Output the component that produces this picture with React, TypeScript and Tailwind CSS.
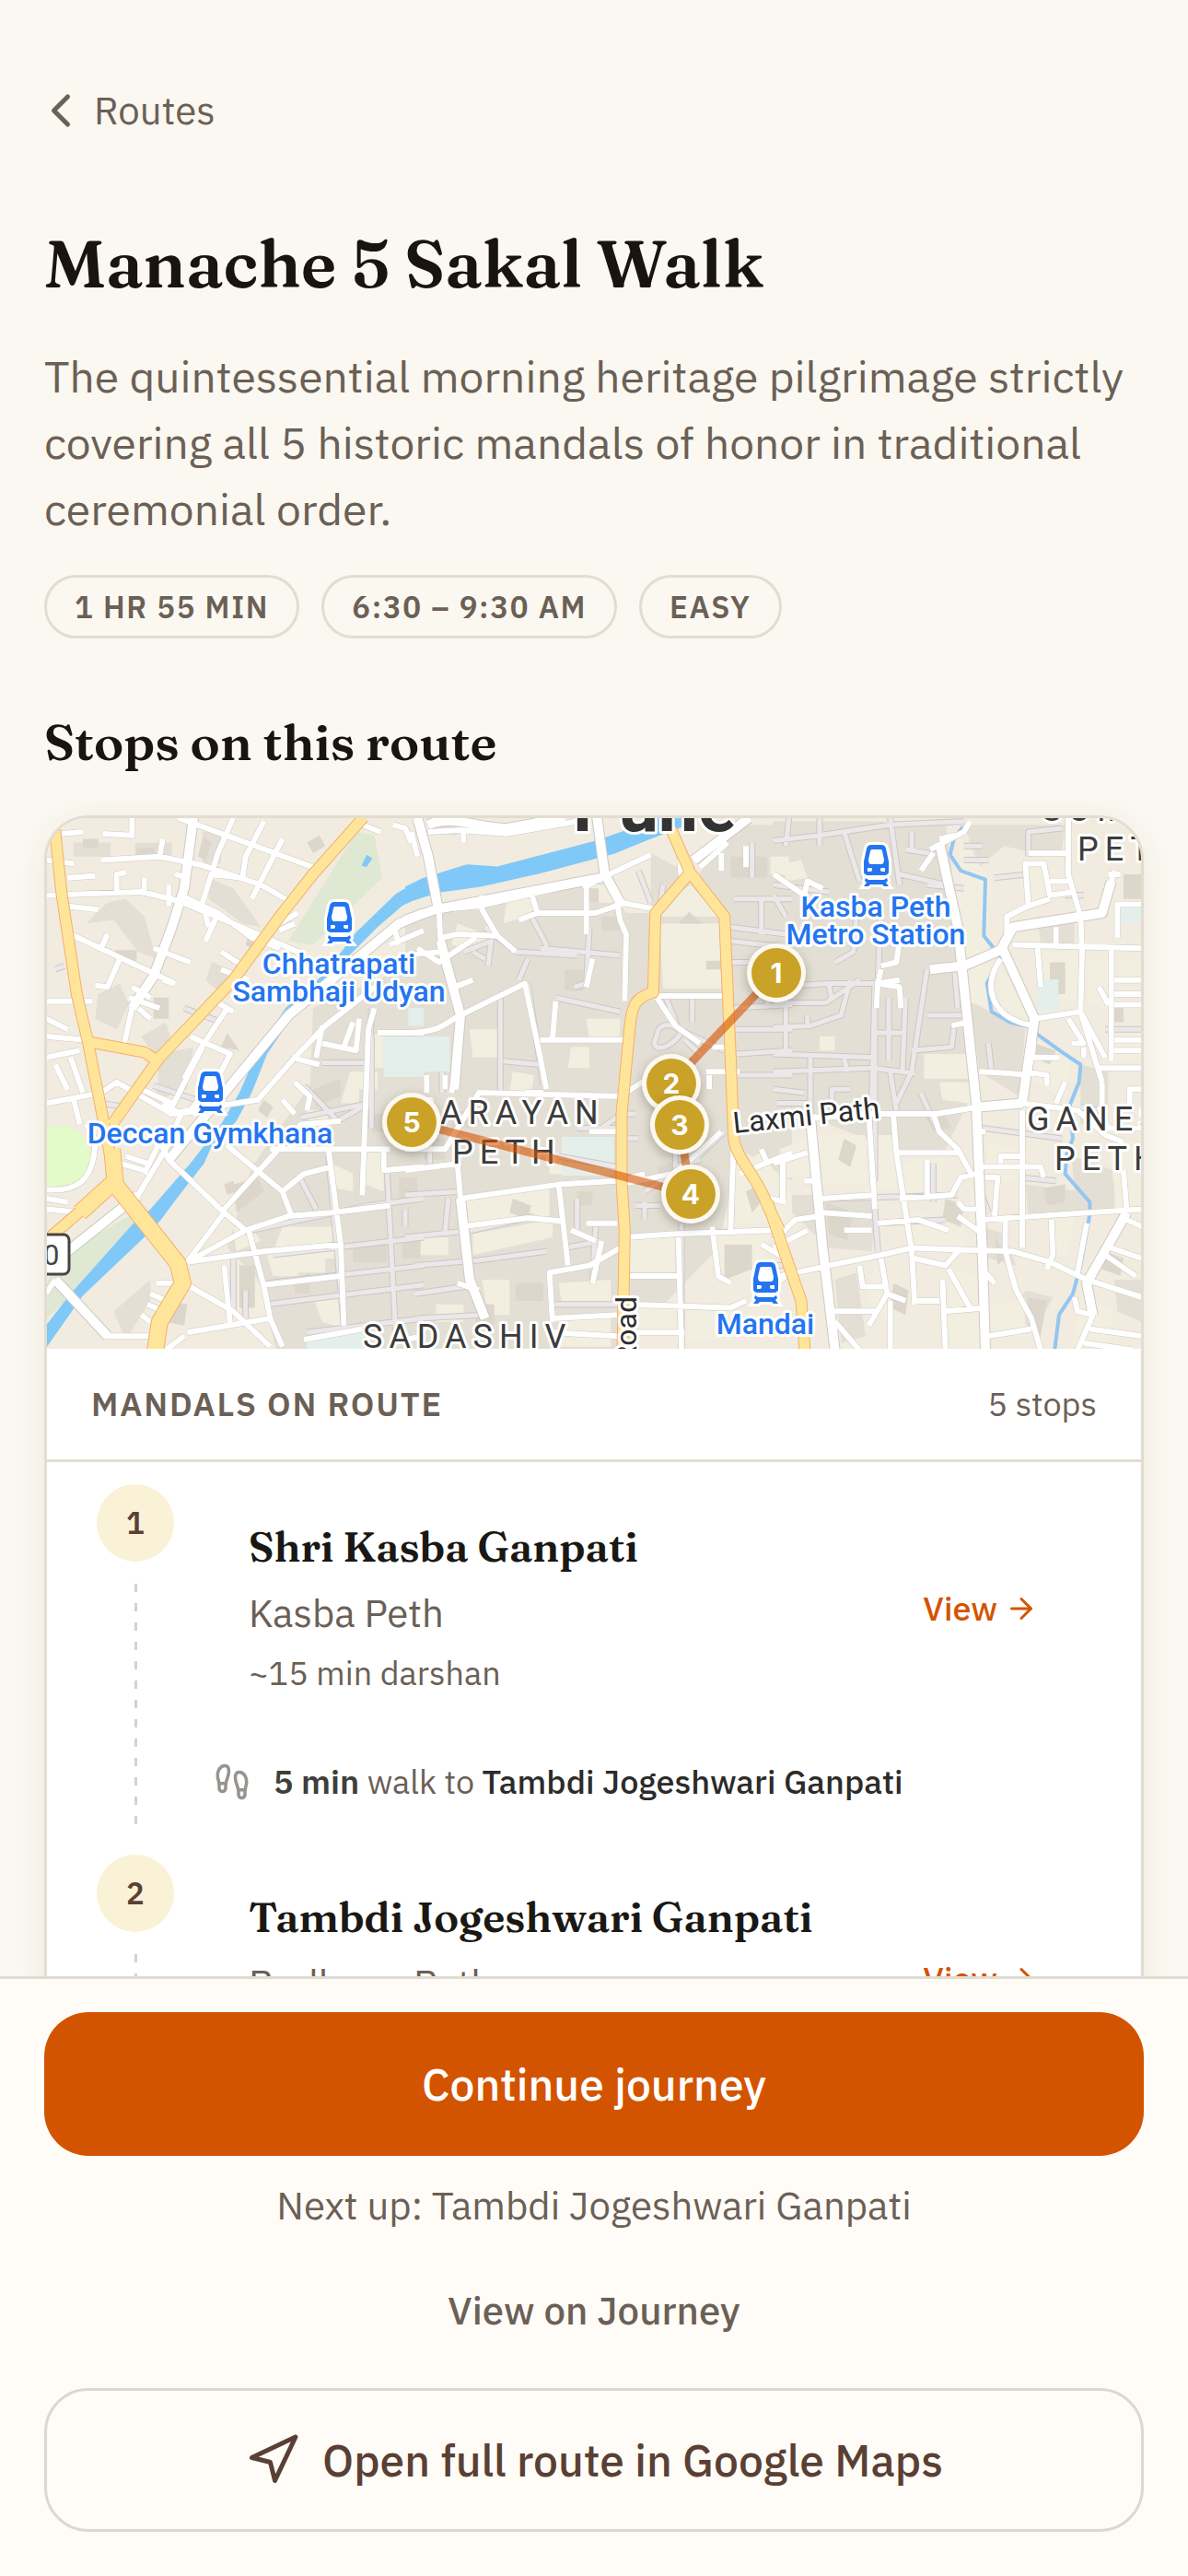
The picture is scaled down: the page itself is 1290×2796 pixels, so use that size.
import React from 'react';
import { ArrowRight, ChevronLeft, Footprints, Navigation } from 'lucide-react';

const tags = ['1 HR 55 MIN', '6:30 – 9:30 AM', 'EASY'];

const stops = [
    { name: 'Shri Kasba Ganpati', area: 'Kasba Peth', darshan: '~15 min darshan', walk: { time: '5 min', to: 'Tambdi Jogeshwari Ganpati' } },
    { name: 'Tambdi Jogeshwari Ganpati', area: 'Budhwar Peth', darshan: '~15 min darshan' },
];

const pins = [
    { n: 1, x: 792, y: 168 },
    { n: 2, x: 678, y: 288 },
    { n: 3, x: 687, y: 333 },
    { n: 4, x: 699, y: 408 },
    { n: 5, x: 396, y: 330 },
];

const stations = [
    { x: 317, y: 91, lines: ['Chhatrapati', 'Sambhaji Udyan'] },
    { x: 900, y: 29, lines: ['Kasba Peth', 'Metro Station'] },
    { x: 177, y: 275, lines: ['Deccan Gymkhana'] },
    { x: 780, y: 482, lines: ['Mandai'] },
];

// The map is drawn as three sheets side by side: west, centre, east.
const dense = [
    'M900 560L1260 420V1530H780L720 1330 620 1240 700 1010 890 780ZM120 90h120v40h-120ZM230 260l60-10 60 50 40 120-60-20-80-90-90 10ZM200 520l70-30 30 60-40 70-70-30ZM340 640l80-40 30 80-40 50ZM400 690l110-20-20 120-100 30ZM320 90h120v40h-120ZM540 60h60v90h-60ZM560 190l80 30 90 110-60-10-110-70ZM570 430l90 30-60 60-50-40ZM250 1420l120-90v60l-80 110Z',
    'M0 330L240 240 640 190 720 290H800V120L950 190 1050 40H1260V1050L1090 960 1040 1160 1020 1240 700 1530H0ZM60 60l100-30 60 10-60 30Z',
    'M0 30H560L620 430 650 800 560 960 420 970 0 830ZM640 540l180 80-20 190-130-70ZM1000 720l90 20v130l-90 20ZM970 980l140 40v110l-120 20ZM0 1090h340l-20 160-140-10ZM820 1060l180 20-10 70H830ZM680 1180l70 20 40 90-90-20ZM860 300h120v80H870ZM620 40h330l-10 70-90 10-100-20-80 60ZM200 1330l70-20 30 180-80 20ZM820 1360l90 20-60 100-70-60ZM1110 1330h90v120l-80-30Z',
];

const light = [
    'M1020 740h90v50h-60v40h-60ZM800 1180h170v90H760ZM750 1260h100v60h-80ZM960 1000l70 30v50l-60-10ZM1070 970h60v110l-60-20ZM880 850h60l20 50-70 30ZM640 1180h60l30 40-80 30ZM830 1250h110v60H830ZM900 1380h90l20 90-80-20ZM1080 640l50-10v100h-60ZM690 1330l50 20 20 80-70-10Z',
    'M210 620h100v80H220ZM830 320h200v185H840ZM350 740l70 10-10 60-70-10ZM190 1090l280-20v80l-280 30ZM20 1210h120v50H30ZM220 1200l260-40v50l-260 50ZM330 260l80-30 20 60-110 30ZM590 210h90v50h-80ZM170 320l120 40-60 30-80-10ZM590 590h110v60H600ZM730 1210l150-10v110H730ZM1010 1200l180-10-40 130H1020ZM1070 1010l90-40 100 120v80h-180ZM250 1330h90v100h-70ZM500 1340l170-10v70H510ZM500 1440l170-10v90H500ZM540 670h60v60h-70ZM1190 130h60v50h-60ZM880 240l50-30 90 90H830ZM740 1410h140v60H740ZM920 1420h150v80H920ZM100 1400h90v50h-90ZM470 970h40v60h-40Z',
    'M30 150l60-10 20 50-70 10ZM490 690h150v70H490ZM540 770h100v60l-90-10ZM600 60l100 130v220l-70 20ZM640 450l60-30 10 140-80-20ZM740 440l90 150-90-30ZM150 640h50v40h-50ZM570 220h50v60h-50ZM700 950h110l10 100H690ZM20 960l90-30 20 110H20ZM140 920h160v140H150ZM330 920h60l10 150h-60ZM420 1000l140-20-20 90-110 20ZM450 1130l180 60v50H460ZM330 1290l90 100-40 60-70-60ZM580 1300l80 20 10 90H570ZM570 1430h110v90H570ZM700 1410l120-30v110H700ZM900 1160l80-10-20 120-70-20ZM830 640l140 60-20 120-110-60ZM1020 860l80 20v40h-90ZM1090 940h110v180l-80 10ZM1110 620h90v90h-90ZM870 400h120v140H870ZM1020 420h70v140l-60-10ZM1000 1380l100 30v110H970ZM830 160l60-10 30 90-80 20ZM640 1070h30v100h-30ZM1130 420h70v60h-70Z',
];

const buildings = [
    'M150 80h50v25h-50ZM255 395h70v30h-70ZM325 105h60v30h-60ZM540 75l30 15-20 50-25-10ZM380 530h50v60h-50ZM640 1060l80-20 20 40-90 60ZM900 790l90-30v50l-80 30ZM840 1330l50-20v60h-50ZM660 1290h50v120h-50ZM1090 860h60v50h-60ZM1180 1040h60v70h-60ZM1030 1230h110v50h-110ZM1190 1220h60v50h-60ZM660 680l-60-10 20-40ZM690 350l50 20-20 30-40-20ZM610 1060l30-10 10 30-30 10ZM740 820l30 20-20 30-30-20ZM880 90l40-20 20 30-40 20ZM430 1390l60 10-10 60-60-10Z',
    'M890 320l35-33 45 33ZM980 425h50v25h-50ZM60 930h70v60H60ZM350 1100l60 20-10 40-60-20ZM590 220h40v40h-40ZM640 300h60v40h-60ZM1110 1080l50-20 20 30-50 50ZM1040 1230h90v70l-90 30ZM820 1010l70-20v60h-60ZM230 1400h60v70h-60ZM1060 130h120v60h-120ZM520 450h60v60h-60ZM150 850h70v50h-70ZM360 1340h90v50h-90ZM560 1080h50v40h-50Z',
    'M230 930l40 20-20 60-40-20ZM170 1110l90 30-20 80-60-20ZM560 1100l60 20-10 60-60-20ZM880 1070l70-10v50l-60 10ZM900 430h50v90h-50ZM1140 180h60v70h-60ZM390 1340l50 20-10 70-50-20ZM720 1210l40 50-30 30ZM850 660l70 20-20 40-50-20ZM1080 1250l60 20-10 50-60-20ZM830 1380l60 10-20 100-50-60ZM490 860l60-10 30 50-60 10ZM1100 550h40v50h-40Z',
];

// Pale lanes inside the old city blocks
const lanes = [
    'M860 870L1080 830M870 780L980 880 1080 830M1090 640L1090 900M700 1190L1080 1120 1260 1100M770 1260L1260 1210M750 1340L1260 1290M750 1400L1260 1345M880 1480L1260 1440M950 980L1000 1460M1140 1010L1170 1500M1090 560L1080 840M930 715H1080M380 780L520 820M210 830L290 840M1200 1130V1180M480 560L600 600M850 1030L910 1130M640 1260V1430M680 1360V1440M60 450L90 440',
    'M440 390L700 410M260 330L360 400 560 410M405 290L460 380 450 410M400 420L370 480M310 520V800M400 490L450 780M320 710L440 720M490 530L700 570M550 500L590 490 600 330M720 850L640 900M0 1090L180 1080M0 1210L220 1190 420 1150M30 1290L240 1275 460 1250M30 1370L230 1345M40 1440L250 1430M140 1100L130 1200 M560 1100V1190M520 1240L640 1220M1070 250H1260M1130 90V190M1060 330L1240 350M1060 370L1220 385M1060 560L1260 550M1080 620H1260M1080 690L1260 680M1080 750H1260M935 530V600M820 640C790 680 850 690 900 630C860 590 820 610 820 640M850 530L890 620 1040 680M1160 250V350M1180 480V560M560 900H690M500 980L690 1010M720 860H750M720 930H760M750 1120H830M780 1110V1160M880 950V1010L960 990M900 1170V1530M910 650L960 690M760 170L800 260M840 210L830 270M190 400L280 370 270 440M220 400L260 420M780 1080L930 1000 1040 910M120 800V740M1060 430H1120M80 1000V940M620 1180L610 1340M470 1400H700M1190 1290H1260',
    'M0 85L150 70 380 40 620 30M50 20L40 100M150 20V100M230 60L280 200M380 20L410 210M0 210L180 230M0 240L40 300M0 500L180 490 330 490M0 545H170L280 480M180 490L190 540M0 615L120 610 220 580 250 480M110 580V610M330 490L320 820M330 560V1050M375 530V710M430 530L420 740M500 450L450 740 400 830M590 450L600 560M0 690L330 700M0 740L320 730 460 745M40 400V680M120 700V860M230 700L240 740M0 790L100 800M190 850V790H250M330 630H430M400 850L380 740M500 580L620 580M450 680L580 670 590 600M500 210L620 220M430 110L570 130M620 100H680M620 140H700M830 130V60L940 50M830 180L720 190M410 180L560 210M480 800L520 880M700 660L710 740M180 1100L600 1090M330 1130L340 1250M340 1170L560 1160M1000 840L1060 850M680 900L940 930M800 1040L920 1050M670 1070L700 1140M1080 620H1200M950 240H1010M450 60V110M200 430L260 400 270 300M350 260L340 480M10 830H120M520 1110V1000',
];

const streets = [
    'M30 140L120 150M80 65L150 60M215 65L310 70V20M30 240L340 230 460 255 640 320 850 400M210 140L400 130 540 155 730 210 830 260M100 190L190 185M510 20L480 220 440 330 380 470 310 560 285 660M640 20L590 120 540 260 560 330M460 20L900 160M740 30L680 130 670 190 560 180M800 80L700 250M90 270L200 280M260 230V180L290 175M350 240V190M400 130L410 80M430 270V210M450 180L490 190M110 350L280 420 450 490M380 390L500 430M270 420L230 500 190 495M300 530L400 560M310 500L370 530M210 390L230 350M330 560L370 590M470 240L590 290 700 360 790 390M590 290L550 370M30 540H180M30 640L160 650M30 700L140 680M60 720L100 790M30 830L210 800 260 770 440 860 560 850M110 700L150 800M30 590L100 620M120 820L140 890M340 790L440 830M410 830L470 860 420 960 330 1090 100 1250M480 760L530 680 620 560M500 640L630 690 600 740 500 850M540 670L440 840M30 1100L100 1110M30 1130L150 1140M190 930C190 1060 120 1080 30 1075M160 890C190 920 190 940 190 960M430 990L610 1140 680 1190 820 1150 960 1140 1150 1120M680 1190L490 1280 740 1250 990 1230M610 1140L490 1280M690 1190L740 1350 760 1440M740 1345L990 1320M500 1350L640 1420 760 1520M400 940L430 990 820 580 1180 320 1260 290M430 860L720 820 840 700 940 610 1100 500M620 950L800 1080 830 1150M800 1080L870 1030 960 1010M600 1140L860 890 990 880M830 700L920 720M930 610L910 700M930 660L1040 680 1050 590M1000 670L1030 600M840 770L890 810 880 850M800 820L840 860M1100 560L1080 620 1060 1090M1110 630H1260M760 960L1060 960 1150 960M1130 960V1020L1260 1010M950 960L990 1230 1000 1460M610 1290L630 1460M490 1480L760 1440M390 1340H480M60 1330L230 1490 370 1490M60 1330L30 1370M370 1370L450 1400M360 1400L440 1430M340 1430L370 1450M600 400L690 450M600 450L690 480M580 540L640 570M790 320L850 290M790 340L840 320M1060 40L1120 60M1160 40L1200 50 1220 90M270 1000L350 1020M290 980L360 1000M400 940L350 1030M760 1440L800 1520M420 1530L480 1490M870 1500L1060 1470M410 480L450 490M740 350L790 390M1260 340L1150 380M1180 380L1160 320M870 900L820 960',
    'M0 310L100 280 240 270 640 190 800 125M110 280L115 370 180 580 170 720 150 800M40 20L75 130 110 290M75 60L180 55 330 65 560 30M625 20L650 180 700 260 820 280M250 240V280L300 355 170 350 120 360M300 355L360 400M410 230L430 290 620 290 720 260M370 310L430 290M590 220V350M580 220L620 200M0 410L120 400M0 630C120 630 130 600 180 580L390 490 440 700 460 790M40 390L110 430 230 360M160 500L220 480M490 540L480 650 470 640M440 650H720M690 260L700 310 720 350 715 540M610 420L590 500M820 525H1060M820 530L880 610 960 660M890 80L900 200 820 280M940 140L1030 80 1120 20M960 160L1050 90M190 60V90M0 960L130 960 240 800 700 810 790 760M70 750V800M130 750V790M0 1020L180 1000 M170 1000L180 1100 500 1060 690 1050 780 1030M180 1100L210 1330 260 1440M180 1180L400 1155 520 1165M500 1060L530 1290M590 1170H690M540 1190L620 1220M720 1210L880 1200 1200 1190M700 1240L600 1290 470 1310 480 1450M640 1220L610 1340M890 1210L900 1530M1000 1180L1020 1320 1060 1340M730 1320H890M720 1400L1060 1410 1110 1390M720 1480H910M480 1480L690 1490M480 1440L690 1430M0 1500L60 1490M1070 940L1060 1190M1090 1030L1230 980 1260 970M1160 960L1180 1000M1230 980V1100M1190 1100L1240 1110M1030 910L930 990 870 1030 700 1060M980 740H1090M990 750V790M1000 670H1050M560 800V840M390 800H450M600 910H690M1160 1230L1260 1280M240 1360L170 1340M1030 120V170M1110 100V160M1240 1320L1190 1350M160 500L130 440M20 60L40 130',
    'M540 90L600 330 660 830 680 1250 690 1530M510 110L620 60 640 30M540 80L590 70M520 120L480 170M510 450L620 440 740 395 780 330 860 320 1070 290 1100 200 1110 170M340 490L410 480M340 480L335 560M350 450L340 490 410 500 415 560M410 370L400 430 350 440M0 180L100 240 110 200 160 220M780 380L1200 390M745 390L850 590 1000 570M850 590L845 680 810 830M740 420C680 490 700 590 850 610M1000 300L1005 400 1000 570 1070 770M1100 390V710M860 390L870 500M1110 480H1200M1110 520H1200M1110 550H1200M1110 650H1200M1110 680H1200M1060 730H1200M920 330V380M760 350V300L830 270 820 150 880 150 900 240 980 230M830 270L900 250M960 20V180L1000 300M900 200H970M830 120H960M1090 180L1130 180M1200 265H1120V360M1000 570L1080 700M960 590L1010 660 970 660M1010 700V670M580 610L630 600M670 740L770 745 820 750M820 740L890 750V780M950 770L920 830M840 700H930M0 860L160 870 310 860 530 860 670 840 810 830 990 850 1080 920 1140 940M120 870L130 970 160 1240 200 1530M310 860L330 1130M390 860L400 970 450 1250 460 1400M520 860L540 910 600 960 650 1040M400 970L610 970M0 1000L110 970M100 1050H150M670 910H690M680 1010L870 1010 880 1040M690 1040H730L720 1150M740 1000V980H820M810 850L810 1010V1240M680 1160L1200 1130M150 1100L330 1090M410 1100L580 1090 610 1040 660 1030M500 990V1090M600 1110L620 1130 660 1130M160 1140L320 1150M0 1220L70 1160 150 1150M0 1240L110 1190M20 1320L180 1290 350 1260 450 1240 780 1250 900 1280 1020 1330 1200 1380M340 1170L470 1160 570 1190M230 1190L320 1190M755 1160V1250L790 1360 840 1440 870 1530M905 1160L910 1260 890 1300M350 1270L370 1370 430 1390M370 1370L310 1460M280 1290L290 1350 370 1350M380 1390V1530M200 1450L280 1530M180 1420H340M460 1270L560 1290 600 1250M570 1300L640 1410M550 1330L560 1530M450 1390L540 1390M560 1420L690 1410M690 1310L720 1340M700 1490L840 1470M1150 1140L1020 1340 1040 1430 990 1530M1140 1020L1150 1130M1150 1160L1200 1180M1100 1240L1200 1270M1080 1260L1180 1320M980 1380L990 1420 1040 1430M1030 1470L1200 1490M1010 1510L1170 1530M1160 840V790H1200M1070 770V840M1020 1170L990 1310M1090 550L1060 500M0 460L60 440M1060 840L1090 900 1200 900M680 1200L600 1150',
];

const avenues = [
    'M510 20L480 220 440 330 380 470 310 560M430 990L820 580 1180 320 1260 290M330 1090L100 1250M60 1330L230 1490',
    'M40 20L75 130 110 290M115 370L180 580 160 790M75 40C150 10 240 50 330 50L520 20M625 20L650 180 700 260M0 310L100 280 640 190M940 140L1120 20M180 1100L210 1330 260 1440',
    'M540 90L600 330 660 830 680 1250 690 1530M510 450L620 440 740 395 780 330 1070 290 1100 200M745 390L850 590 810 830M120 870L160 1240 200 1530M670 840L810 830M1150 1140L1020 1340 1040 1430',
];

const highways = [
    'M55 20L80 230 130 520 165 650 215 870 255 1050 30 1220M255 1060L460 1285 475 1340 400 1450 385 1535M1065 18L900 180 800 290 640 480 400 700 245 890M165 655L350 685 385 705',
    'M865 50L928 175 815 290 808 515C750 530 740 550 732 610L705 860V1050L715 1190 708 1535M928 175L1040 300 1060 700 1070 930C1080 990 1150 1040 1180 1120L1220 1190',
    'M-20 1110L50 1290 90 1390 102 1535',
];

const wideHighways = ['M255 1060L460 1285 475 1340 400 1450 385 1535M245 960L255 1050 140 1140', '', ''];

const river = [
    'M25 1465L110 1370 310 1175 370 1130 500 1000 600 890 660 800 720 680 810 560 940 460 1040 345 1170 235 1260 190V240L1190 270 1110 330 1030 400 930 485 850 560 750 690 700 800 650 880 570 950 545 1000 460 1095 400 1165 350 1210 150 1375 25 1530Z',
    'M0 215L60 190 200 152 300 158 620 85 720 55 830 15H915L905 45 800 80 680 122 440 178 250 215 110 232 0 262Z',
    '',
];

const canal = ['', '', 'M617 45L587 80 575 125 610 170 690 195 685 355 740 415 695 490 710 570 770 600 830 612 860 635 940 685 1000 720 995 770 965 835 975 930 955 975 950 1030 1030 1110V1145L1000 1290 975 1370 930 1430 915 1535'];

const gardens = ['M1040 60L1100 70 1125 190 900 380 820 370ZM100 1250L300 1150 340 1180 110 1380 30 1440V1340Z', '', ''];
const ponds = ['M1075 125l18 10-20 25-15-5Z', '', ''];
const campus = ['M1130 640h130v115H1130ZM1210 560h50v50h-50ZM880 1490l200-20v60H880Z', 'M0 640h145v100H0ZM510 925h170v110H510Z', 'M858 478h70v90H858ZM1130 270h70v50h-70Z'];

export default function App() {
    return (
        <div className="h-screen flex flex-col bg-[#fbf8f1] text-[#6b6056] font-['IBM_Plex_Sans',Roboto,sans-serif]">
            <main className="flex-1 min-h-0 overflow-y-auto [scrollbar-width:none] px-12 pt-[90px]">
                <a href="#routes" className="flex w-fit items-center gap-1.5 -ml-3 text-[42px] leading-[60px]">
                    <ChevronLeft size={60} strokeWidth={2} />
                    Routes
                </a>

                <h1 className="mt-24 text-[72px] leading-[80px] font-semibold text-[#1a1410] font-['Fraunces','Liberation_Serif',serif]">Manache 5 Sakal Walk</h1>
                <p className="mt-[46px] text-5xl leading-[72px]">
                    The quintessential morning heritage pilgrimage strictly covering all 5 historic mandals of honor in traditional ceremonial order.
                </p>

                <ul className="mt-9 flex flex-wrap gap-6">
                    {tags.map((tag) => (
                        <li key={tag} className="rounded-full border-[3px] border-[#e3ddd1] px-[30px] py-[9px] text-[33px] leading-[45px] font-semibold tracking-[0.05em]">{tag}</li>
                    ))}
                </ul>

                <h2 className="mt-20 text-[54px] leading-[66px] font-semibold text-[#1a1410] font-['Fraunces','Liberation_Serif',serif]">Stops on this route</h2>

                {/* Route card */}
                <section className="mt-[46px] rounded-[48px] border-[3px] border-[#e3ddd1] bg-white overflow-hidden shadow-[0_6px_36px_rgba(90,60,30,0.07)]">
                    <RouteMap />

                    <div className="flex items-center justify-between h-[123px] px-12 border-b-[3px] border-[#e3dcd3] text-4xl leading-[54px]">
                        <h3 className="font-semibold tracking-[0.05em]">MANDALS ON ROUTE</h3>
                        <span>5 stops</span>
                    </div>

                    <ol className="px-12 pt-6">
                        {stops.map((stop, i) => (
                            <StopItem key={stop.name} index={i + 1} {...stop} />
                        ))}
                    </ol>
                </section>
            </main>

            {/* Bottom actions */}
            <footer className="flex flex-col border-t-[3px] border-[#e0dcd2] bg-[#fffcf7] px-12 pt-9 pb-12">
                <button className="h-[156px] rounded-[48px] bg-[#d35400] text-white text-5xl font-medium">Continue journey</button>
                <p className="mt-6 text-center text-[42px] leading-[60px]">Next up: Tambdi Jogeshwari Ganpati</p>
                <button className="my-[18px] h-[132px] text-[42px] leading-[60px] font-medium">View on Journey</button>
                <button className="h-[156px] rounded-[48px] border-[3px] border-[#dcd8d1] flex items-center justify-center gap-6 text-5xl font-medium text-[#5a4034]">
                    <Navigation size={60} strokeWidth={2} />
                    Open full route in Google Maps
                </button>
            </footer>
        </div>
    );
}

const StopItem = ({ index, name, area, darshan, walk }: any) => (
    <li className="flex gap-9">
        <div className="w-24 flex flex-col items-center shrink-0">
            <span className="size-[84px] rounded-full bg-[#faf2d6] flex items-center justify-center text-[33px] font-semibold text-[#5a4034]">{index}</span>
            <div className="mt-6 mb-[33px] w-[3px] flex-1 bg-[repeating-linear-gradient(to_bottom,#d2d2d2_0_9px,transparent_9px_21px)]" />
        </div>
        <div className="flex-1">
            <div className="flex items-center justify-between pt-[38px] pl-[39px] pr-16">
                <div>
                    <h4 className="text-[45px] leading-[60px] font-semibold text-[#1a1814] font-['Fraunces','Liberation_Serif',serif]">{name}</h4>
                    <p className="mt-3 text-[42px] leading-[60px]">{area}</p>
                    <p className="mt-2 text-4xl leading-[54px]">{darshan}</p>
                </div>
                <a href={`#stop-${index}`} className="flex items-center gap-2 text-4xl leading-[54px] font-medium text-[#d35400]">
                    View
                    <ArrowRight size={36} strokeWidth={2} />
                </a>
            </div>
            {walk && (
                <div className="mt-16 pb-[52px] flex items-center gap-6 text-4xl leading-[54px]">
                    <Footprints size={42} strokeWidth={2} className="text-[#97938e]" />
                    <p>
                        <strong className="font-semibold text-[#403e3b]">{walk.time}</strong> walk to <span className="font-medium text-[#2c2b29]">{walk.to}</span>
                    </p>
                </div>
            )}
        </div>
    </li>
);

const Layer = ({ sheets, ...rest }: any) => (
    <g transform="matrix(0.33333 0 0 0.38265 -11 -8)" strokeLinejoin="round" {...rest}>
        {sheets.map((d: string, i: number) => (
            <path key={i} d={d} transform={`translate(${i * 1200} 0)`} vectorEffect="non-scaling-stroke" />
        ))}
    </g>
);

const RouteMap = () => (
    <svg viewBox="0 0 1188 576" preserveAspectRatio="xMidYMid slice" className="block w-full h-[576px] bg-[#f1ecdf]" role="img" aria-label="Route map">
        <Layer sheets={dense} fill="#e4dfd4" />
        <Layer sheets={light} fill="#f3efe0" />
        <Layer sheets={buildings} fill="#dcd6cb" />
        <Layer sheets={gardens} fill="#dfe8d2" />
        <Layer sheets={campus} fill="#e4efec" />
        <ellipse cx="14" cy="368" rx="33" ry="34" fill="#e2fbc8" />
        <Layer sheets={river} fill="#80c8f8" />
        <Layer sheets={ponds} fill="#80c8f8" />

        <Layer sheets={lanes} fill="none" stroke="#cbc7c4" strokeWidth="7" />
        <Layer sheets={lanes} fill="none" stroke="#ece8e9" strokeWidth="5" />
        <Layer sheets={canal} fill="none" stroke="#93c6f2" strokeWidth="4" />
        <Layer sheets={streets} fill="none" stroke="#cdc9c4" strokeWidth="7" />
        <Layer sheets={avenues} fill="none" stroke="#cdc9c4" strokeWidth="12" />
        <Layer sheets={streets} fill="none" stroke="#ffffff" strokeWidth="6" />
        <Layer sheets={avenues} fill="none" stroke="#ffffff" strokeWidth="10" />
        <Layer sheets={wideHighways} fill="none" stroke="#f2b06c" strokeWidth="19" />
        <Layer sheets={highways} fill="none" stroke="#f2b06c" strokeWidth="13" />
        <Layer sheets={highways} fill="none" stroke="#ffe59a" strokeWidth="11" />
        <Layer sheets={wideHighways} fill="none" stroke="#ffe59a" strokeWidth="17" />

        {/* Highway shield */}
        <rect x="-30" y="452" width="54" height="43" rx="6" fill="#fff" stroke="#454545" strokeWidth="3" />
        <text x="-4" y="485" fontSize="31" fill="#454545" fontFamily="Roboto, sans-serif">0</text>

        {/* Place names */}
        <g fontFamily="Roboto, sans-serif" stroke="#fff" strokeWidth="6" strokeLinejoin="round" paintOrder="stroke" fill="#3c3c3c">
            <text x="571" y="14" fontSize="77" fontWeight="700" fill="#333">Pune</text>
            <g fontSize="36" letterSpacing="7">
                <text x="394" y="332">NARAYAN</text>
                <text x="440" y="375">PETH</text>
                <text x="343" y="575">SADASHIV</text>
                <text x="1064" y="339">GANESH</text>
                <text x="1094" y="382">PETH</text>
                <text x="1080" y="3">SOMWAR</text>
                <text x="1119" y="46">PETH</text>
            </g>
            <g fontSize="32" fill="#2c2c2c">
                <text transform="translate(746 342) rotate(-6)">Laxmi Path</text>
                <text transform="translate(640 519) rotate(-90)" textAnchor="end">Road</text>
            </g>
            <g fontSize="32" fontWeight="500" textAnchor="middle" fill="#2475f0">
                {stations.map((s) => s.lines.map((line, i) => (
                    <text key={line} x={s.x} y={s.y + 78 + i * 30}>{line}</text>
                )))}
            </g>
        </g>
        {stations.map((s) => (
            <g key={s.lines[0]} transform={`translate(${s.x - 13} ${s.y})`} fill="#2475f0" stroke="#fff" strokeWidth="6" paintOrder="stroke">
                <path d="M8 0h11q4 0 5 4l3 14v11q0 4-4 4H4q-4 0-4-4V18L3 4q1-4 5-4Z" />
                <path d="M2 36l3 2h17l3-2 1 3-2 2 3 4h-5l-2-2H7l-2 2H0l3-4-2-2Z" />
                <path stroke="none" fill="#fff" d="M9 5h9q2 0 2 2l2 9q0 5-3 5H8q-3 0-3-5L7 7q0-2 2-2ZM4 25h4q1 0 1 2t-2 2H4ZM23 25h-4q-1 0-1 2t2 2h3Z" />
            </g>
        ))}

        {/* Walking route */}
        <polyline points={pins.map((p) => `${p.x},${p.y}`).join(' ')} fill="none" stroke="#d35400" strokeOpacity="0.6" strokeWidth="9" strokeLinejoin="round" />
        {pins.map((p) => (
            <g key={p.n} transform={`translate(${p.x} ${p.y})`}>
                <circle r="32" fill="#fdf9f1" className="drop-shadow-[0_4px_6px_rgba(0,0,0,0.25)]" />
                <circle r="27" fill="#c9a227" />
                <text y="11" textAnchor="middle" fontSize="30" fontWeight="700" fill="#fff" fontFamily="Inter, sans-serif">{p.n}</text>
            </g>
        ))}
    </svg>
);
